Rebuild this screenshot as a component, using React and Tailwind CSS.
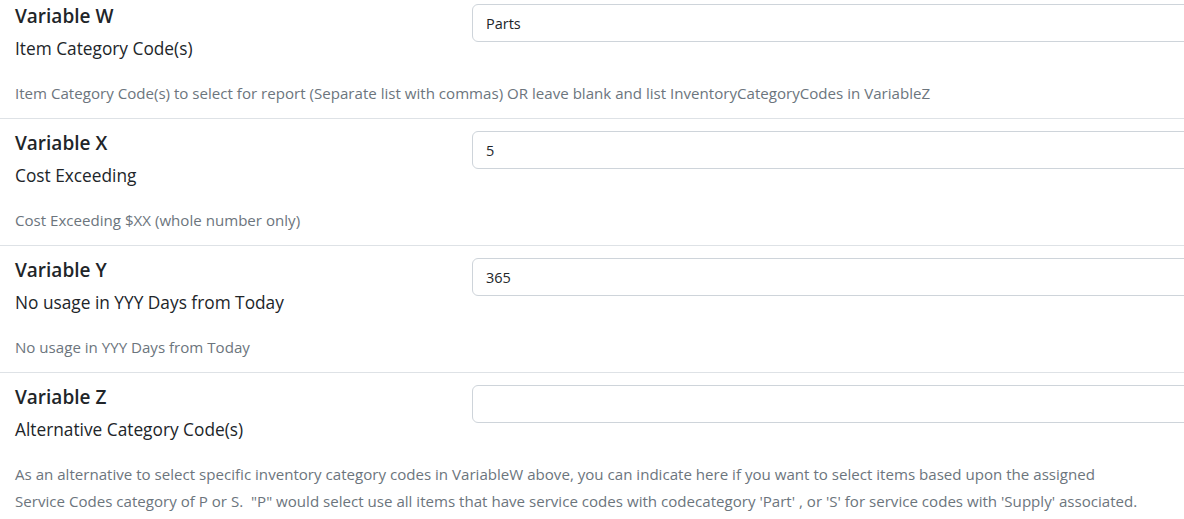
import { useState } from 'react';

const variables = [
  {
    id: 'W',
    label: 'Item Category Code(s)',
    value: 'Parts',
    help: ['Item Category Code(s) to select for report (Separate list with commas) OR leave blank and list InventoryCategoryCodes in VariableZ'],
  },
  {
    id: 'X',
    label: 'Cost Exceeding',
    value: '5',
    help: ['Cost Exceeding $XX (whole number only)'],
  },
  {
    id: 'Y',
    label: 'No usage in YYY Days from Today',
    value: '365',
    help: ['No usage in YYY Days from Today'],
  },
  {
    id: 'Z',
    label: 'Alternative Category Code(s)',
    value: '',
    help: [
      'As an alternative to select specific inventory category codes in VariableW above, you can indicate here if you want to select items based upon the assigned',
      'Service Codes category of P or S.  "P" would select use all items that have service codes with codecategory \'Part\' , or \'S\' for service codes with \'Supply\' associated.',
    ],
  },
];

function VariableRow({ item, first, last, onChange }) {
  return (
    <div className={`px-[15px] ${first ? 'pt-[2px]' : 'pt-[10px]'} ${last ? 'pb-[6px]' : 'pb-[11px] border-b border-[#dee2e6]'}`}>
      <div className="flex">
        <div className="w-[457px] shrink-0">
          <div className="text-[19px] leading-[28px] font-semibold text-[#212529]">Variable {item.id}</div>
          <div className="mt-[6px] text-[17.3px] leading-[26px] text-[#212529]">{item.label}</div>
        </div>
        <div className="flex-1 pt-[2px]">
          <input
            type="text"
            value={item.value}
            onChange={(e) => onChange(item.id, e.target.value)}
            className="w-full h-[38px] px-[13px] rounded-[6px] border border-[#ced4da] bg-white text-[14.5px] text-[#212529] outline-none"
          />
        </div>
      </div>
      <div className="mt-[18px] text-[15.1px] leading-[27px] text-[#6c757d] whitespace-pre">
        {item.help.map((line, i) => (
          <div key={i}>{line}</div>
        ))}
      </div>
    </div>
  );
}

export default function App() {
  const [values, setValues] = useState(variables);

  const handleChange = (id, value) => {
    setValues(values.map((v) => (v.id === id ? { ...v, value } : v)));
  };

  return (
    <div className="w-[1184px] h-[519px] overflow-hidden bg-white" style={{ fontFamily: '"Open Sans", "Noto Sans", sans-serif' }}>
      <div className="w-[1240px]">
        {values.map((item, i) => (
          <VariableRow key={item.id} item={item} first={i === 0} last={i === values.length - 1} onChange={handleChange} />
        ))}
      </div>
    </div>
  );
}
